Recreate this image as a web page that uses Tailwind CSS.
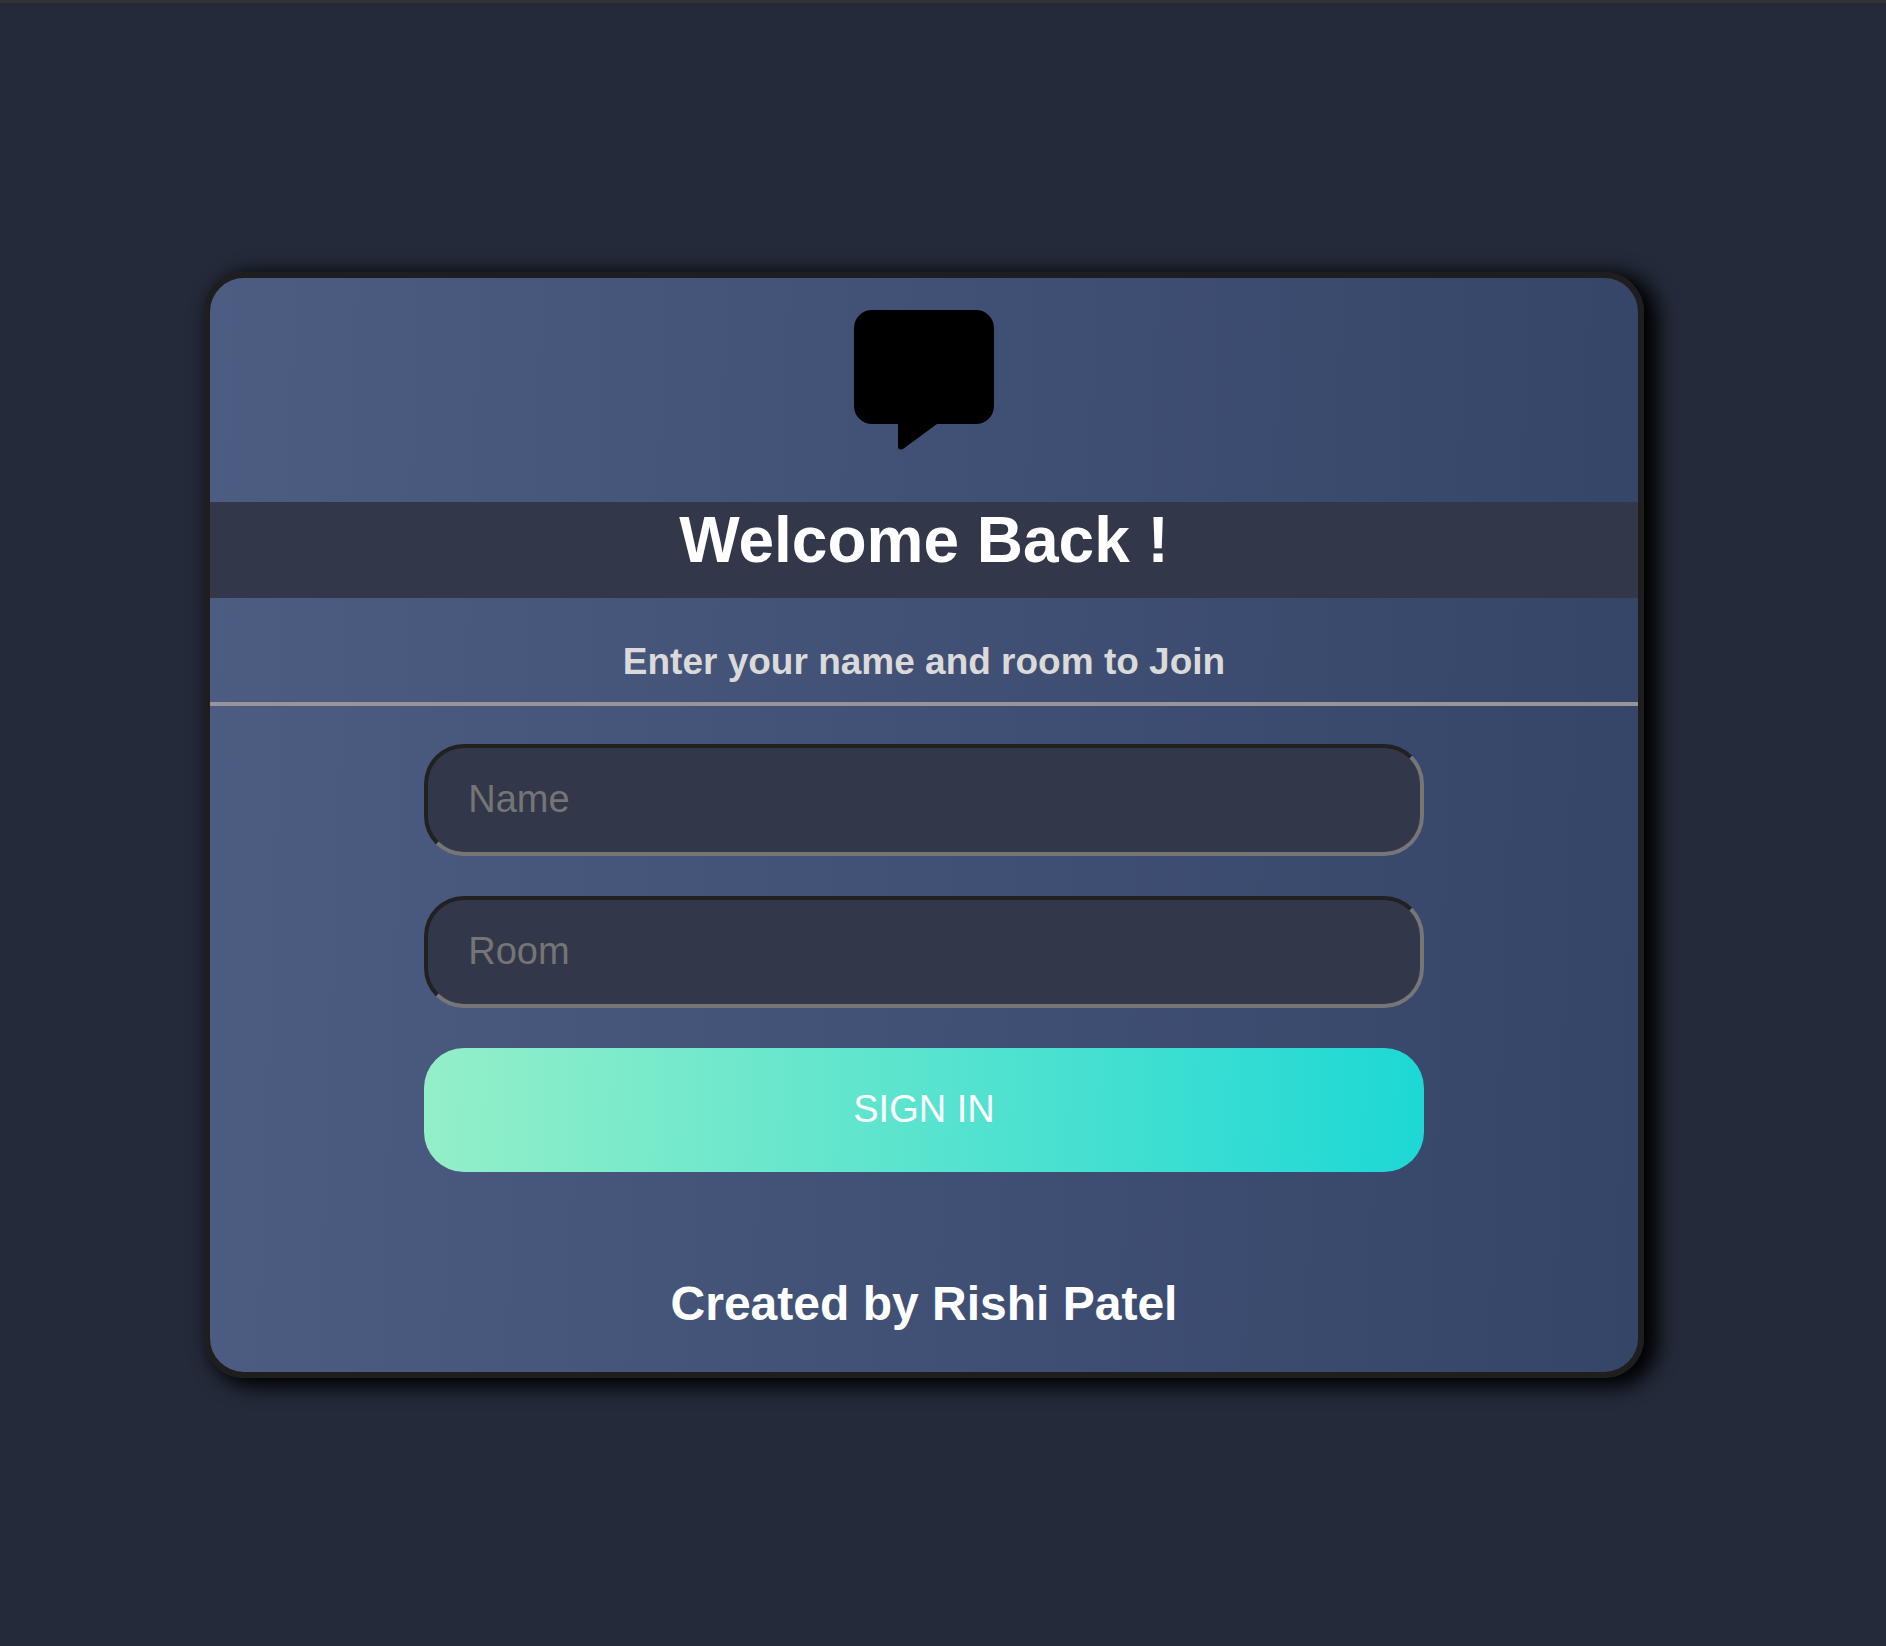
<!DOCTYPE html>
<html lang="en">
<head>
<meta charset="utf-8">
<meta name="viewport" content="width=device-width, initial-scale=1">
<title>Join a room</title>
<script src="https://cdn.jsdelivr.net/npm/@tailwindcss/browser@4"></script>
</head>
<body class="flex min-h-screen items-center justify-center border-t-3 border-[#333333] bg-[#242a39] pr-[38px] font-['Liberation_Sans',Arial,sans-serif]">
  <main class="flex w-full max-w-[1440px] flex-col items-center rounded-[40px] border-6 border-[#1e1e1e] bg-linear-[92deg,#4d5c82,#354568] bg-origin-border pt-8 pb-10 text-center shadow-[10px_5px_20px_4px_#000]">
    <svg class="size-[140px]" viewBox="0 0 140 140" aria-hidden="true">
      <path d="M18 0H122A18 18 0 0 1 140 18V96A18 18 0 0 1 122 114H83L49 139Q44 141 44 136V114H18A18 18 0 0 1 0 96V18A18 18 0 0 1 18 0Z"/>
    </svg>
    <h1 class="mt-[52px] h-24 w-full bg-[#32384a] text-[64px] leading-[76px] font-bold text-white">Welcome Back !</h1>
    <h2 class="mt-[42px] w-full border-b-4 border-[#969696] pb-[18px] text-[37px] leading-[44px] font-bold text-[#dadada]">Enter your name and room to Join</h2>
    <form class="mt-[38px] flex w-[70%] flex-col gap-10">
      <input type="text" aria-label="Name" placeholder="Name" class="h-28 w-full rounded-[40px] border-4 border-t-[#212121] border-r-[#767676] border-b-[#767676] border-l-[#212121] bg-[#32384a] px-10 text-[38px] text-white placeholder:text-[#757575]">
      <input type="text" aria-label="Room" placeholder="Room" class="h-28 w-full rounded-[40px] border-4 border-t-[#212121] border-r-[#767676] border-b-[#767676] border-l-[#212121] bg-[#32384a] px-10 text-[38px] text-white placeholder:text-[#757575]">
      <button type="submit" class="h-[124px] w-full rounded-[40px] bg-linear-[92deg,#94efc8,#1dd8d5] text-[38px] text-white">SIGN IN</button>
    </form>
    <p class="mt-[104px] text-[48px] leading-[56px] font-bold text-white">Created by Rishi Patel</p>
  </main>
</body>
</html>
